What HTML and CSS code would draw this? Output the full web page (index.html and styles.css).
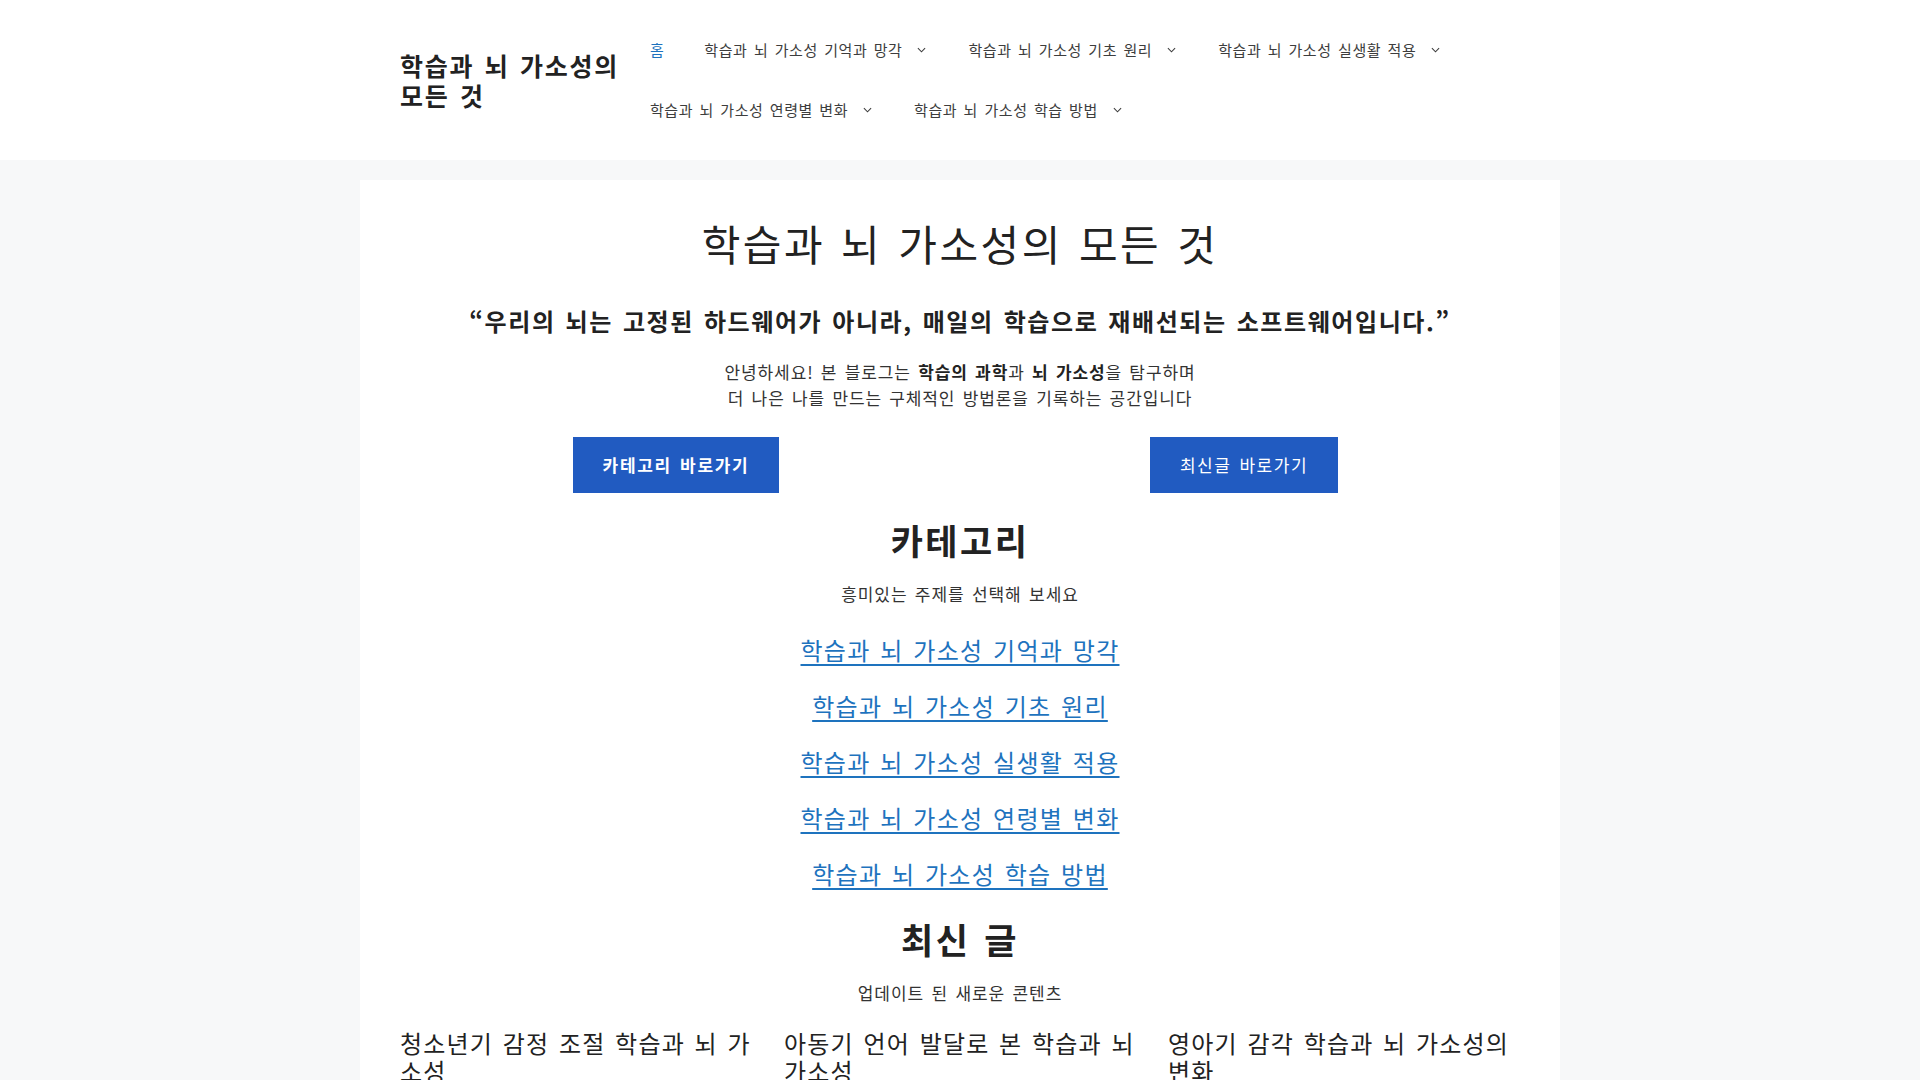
FILE: index.html
```html
<!DOCTYPE html>
<html lang="ko">
<head>
<meta charset="utf-8">
<title>학습과 뇌 가소성의 모든 것</title>
<link rel="stylesheet" href="styles.css">
</head>
<body>
<header class="site-header">
  <div class="inside-header">
    <div class="site-branding">
      <p class="main-title"><a href="#">학습과 뇌 가소성의 모든 것</a></p>
    </div>
    <nav class="main-nav">
      <ul class="menu">
        <li class="menu-item current"><a href="#">홈</a></li>
        <li class="menu-item has-sub"><a href="#">학습과 뇌 가소성 기억과 망각<span class="toggle"><svg class="chev" viewBox="0 0 10 6" width="9" height="6"><polyline points="1,1 5,5 9,1" fill="none" stroke="currentColor" stroke-width="1.2"/></svg></span></a></li>
        <li class="menu-item has-sub"><a href="#">학습과 뇌 가소성 기초 원리<span class="toggle"><svg class="chev" viewBox="0 0 10 6" width="9" height="6"><polyline points="1,1 5,5 9,1" fill="none" stroke="currentColor" stroke-width="1.2"/></svg></span></a></li>
        <li class="menu-item has-sub"><a href="#">학습과 뇌 가소성 실생활 적용<span class="toggle"><svg class="chev" viewBox="0 0 10 6" width="9" height="6"><polyline points="1,1 5,5 9,1" fill="none" stroke="currentColor" stroke-width="1.2"/></svg></span></a></li>
        <li class="menu-item has-sub"><a href="#">학습과 뇌 가소성 연령별 변화<span class="toggle"><svg class="chev" viewBox="0 0 10 6" width="9" height="6"><polyline points="1,1 5,5 9,1" fill="none" stroke="currentColor" stroke-width="1.2"/></svg></span></a></li>
        <li class="menu-item has-sub"><a href="#">학습과 뇌 가소성 학습 방법<span class="toggle"><svg class="chev" viewBox="0 0 10 6" width="9" height="6"><polyline points="1,1 5,5 9,1" fill="none" stroke="currentColor" stroke-width="1.2"/></svg></span></a></li>
      </ul>
    </nav>
  </div>
</header>

<div class="site-content">
  <main class="card">
    <h1 class="hero-title">학습과 뇌 가소성의 모든 것</h1>
    <p class="quote">“우리의 뇌는 고정된 하드웨어가 아니라, 매일의 학습으로 재배선되는 소프트웨어입니다.”</p>
    <p class="intro">안녕하세요! 본 블로그는 <strong>학습의 과학</strong>과 <strong>뇌 가소성</strong>을 탐구하며<br>더 나은 나를 만드는 구체적인 방법론을 기록하는 공간입니다</p>

    <div class="buttons">
      <div class="btn-col"><a class="btn btn-bold" href="#">카테고리 바로가기</a></div>
      <div class="btn-col"><a class="btn" href="#">최신글 바로가기</a></div>
    </div>

    <h2 class="section-title">카테고리</h2>
    <p class="section-sub">흥미있는 주제를 선택해 보세요</p>
    <ul class="cat-list">
      <li><a href="#">학습과 뇌 가소성 기억과 망각</a></li>
      <li><a href="#">학습과 뇌 가소성 기초 원리</a></li>
      <li><a href="#">학습과 뇌 가소성 실생활 적용</a></li>
      <li><a href="#">학습과 뇌 가소성 연령별 변화</a></li>
      <li><a href="#">학습과 뇌 가소성 학습 방법</a></li>
    </ul>

    <h2 class="section-title">최신 글</h2>
    <p class="section-sub section-sub-posts">업데이트 된 새로운 콘텐츠</p>
    <div class="posts">
      <article class="post"><h3 class="post-title">청소년기 감정 조절 학습과 뇌 가소성</h3></article>
      <article class="post"><h3 class="post-title">아동기 언어 발달로 본 학습과 뇌 가소성</h3></article>
      <article class="post"><h3 class="post-title">영아기 감각 학습과 뇌 가소성의 변화</h3></article>
    </div>
  </main>
</div>
</body>
</html>
```

FILE: styles.css
```css
* {
  box-sizing: border-box;
}

html, body {
  margin: 0;
  padding: 0;
}

body {
  background: #f7f8f9;
  color: #222222;
  font-family: "Noto Sans CJK KR", "Noto Sans", sans-serif;
  font-size: 17px;
  line-height: 1.5;
  word-spacing: 0.1em;
  letter-spacing: 0.05em;
}

a {
  text-decoration: none;
  color: inherit;
}

/* Header */
.site-header {
  background: #ffffff;
}

.inside-header {
  width: 1200px;
  margin: 0 auto;
  padding: 20px 40px;
  display: flex;
  align-items: center;
}

.site-branding {
  flex: 0 0 230px;
}

.main-title {
  margin: 0;
  font-size: 25px;
  line-height: 30px;
  font-weight: 700;
  letter-spacing: 0.07em;
  word-break: keep-all;
  color: #222222;
}

.main-nav {
  flex: 1;
}

.menu {
  list-style: none;
  margin: 0;
  padding: 0;
  display: flex;
  flex-wrap: wrap;
}

.menu-item a {
  display: block;
  padding: 0 20px;
  line-height: 60px;
  font-size: 15px;
  letter-spacing: 0.037em;
  color: #3d3d3d;
}

.menu-item.has-sub a {
  padding-right: 0;
}

.menu-item.current a {
  color: #1e73be;
}

.toggle {
  display: inline-block;
  padding: 0 22px 0 15px;
}

.chev {
  display: inline-block;
  vertical-align: middle;
  position: relative;
  top: -2px;
}

/* Content */
.site-content {
  width: 1200px;
  margin: 20px auto 0;
}

.card {
  background: #ffffff;
  padding: 40px;
  text-align: center;
}

.hero-title {
  margin: 0 0 37px;
  font-size: 42px;
  line-height: 46px;
  font-weight: 400;
  letter-spacing: 0.06em;
  color: #222222;
}

.quote {
  margin: 0 0 20px;
  font-size: 24px;
  line-height: 36px;
  font-weight: 700;
  letter-spacing: 0.066em;
  color: #222222;
}

.intro {
  margin: 0 0 26px;
  font-size: 17px;
  line-height: 26px;
  letter-spacing: 0.052em;
  color: #333333;
}

.intro strong {
  font-weight: 700;
  color: #222222;
}

.buttons {
  display: grid;
  grid-template-columns: 1fr 1fr;
  column-gap: 16px;
  margin-bottom: 26px;
}

.btn-col {
  display: flex;
  justify-content: center;
}

.btn {
  display: inline-block;
  background: #215bc1;
  color: #ffffff;
  padding: 15px 30px;
  font-size: 17px;
  line-height: 26px;
  letter-spacing: 0.09em;
}

.btn-bold {
  font-weight: 700;
  letter-spacing: 0.1em;
}

.section-title {
  margin: 0 0 20px;
  font-size: 35px;
  line-height: 42px;
  font-weight: 700;
  letter-spacing: 0.07em;
  color: #222222;
}

.section-sub {
  margin: 0 0 25px;
  font-size: 17px;
  line-height: 26px;
  letter-spacing: 0.055em;
  color: #333333;
}

.section-sub-posts {
  margin-bottom: 23px;
}

.cat-list {
  list-style: none;
  margin: 0 0 26px;
  padding: 0;
  display: flex;
  flex-direction: column;
  gap: 20px;
}

.cat-list li {
  font-size: 24px;
  line-height: 36px;
  letter-spacing: 0.053em;
}

.cat-list a {
  color: #1e73be;
  text-decoration: underline;
  text-underline-offset: 4px;
  text-decoration-thickness: 1.5px;
}

.posts {
  display: grid;
  grid-template-columns: repeat(3, 1fr);
  column-gap: 32px;
  text-align: left;
}

.post-title {
  margin: 0;
  font-size: 24px;
  line-height: 28px;
  font-weight: 400;
  letter-spacing: 0.05em;
  color: #222222;
}
```
